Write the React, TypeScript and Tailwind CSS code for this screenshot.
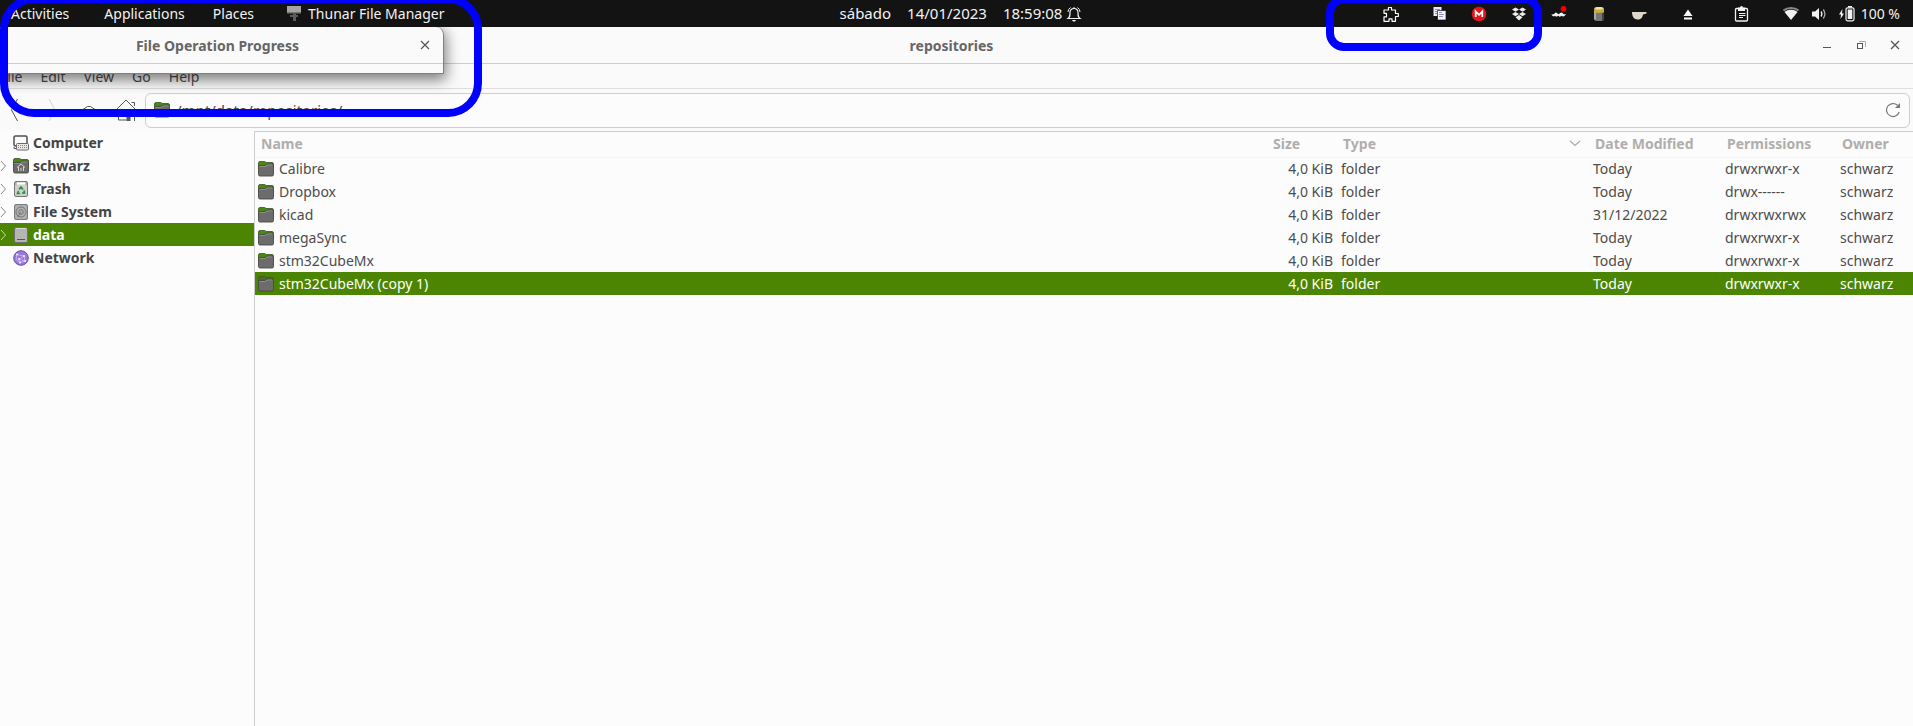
import type { ReactNode } from 'react'

type Row = { name: string; date: string; perms: string; selected?: boolean }

const rows: Row[] = [
  { name: 'Calibre', date: 'Today', perms: 'drwxrwxr-x' },
  { name: 'Dropbox', date: 'Today', perms: 'drwx------' },
  { name: 'kicad', date: '31/12/2022', perms: 'drwxrwxrwx' },
  { name: 'megaSync', date: 'Today', perms: 'drwxrwxr-x' },
  { name: 'stm32CubeMx', date: 'Today', perms: 'drwxrwxr-x' },
  { name: 'stm32CubeMx (copy 1)', date: 'Today', perms: 'drwxrwxr-x', selected: true },
]

function Icon({ children, className = '' }: { children: ReactNode; className?: string }) {
  return (
    <svg viewBox="0 0 16 16" className={`size-4 shrink-0 ${className}`} fill="none" aria-hidden="true">
      {children}
    </svg>
  )
}

function FolderIcon({ home, dim }: { home?: boolean; dim?: boolean }) {
  return (
    <Icon>
      <path d="M.5 8V2Q.5 .5 2 .5h4.500q1 0 1.500 1h6q1.500 0 1.500 1.500v5z" fill={dim ? '#4f6a2e' : '#468a12'} stroke={dim ? '#46552f' : '#39561d'} strokeWidth=".8" />
      <path d="M.5 5.500q0-1 1-1H7L8.500 3H14q1.500 0 1.500 1.500v9q0 1.500-1.500 1.500H2Q.5 15 .5 13.500z" fill="#6c6c6c" stroke="#4a4a42" strokeWidth=".9" />
      <path d="M1.500 5.500H7.500L9 4h5.500" stroke="#979797" strokeWidth=".8" />
      {home && <path d="M4 9.500 8 6l4 3.500M5.500 9v4M10.500 9v4M8 13v-3" stroke="#d8d8d8" />}
    </Icon>
  )
}

const places: { label: string; expander: boolean; selected?: boolean; icon: ReactNode }[] = [
  {
    label: 'Computer',
    expander: false,
    icon: (
      <Icon>
        <rect x="1" y="1" width="13" height="10" rx="1.500" fill="#fafafa" stroke="#505050" strokeWidth="1.500" />
        <path d="M1 12v1.500h3" stroke="#505050" />
        <rect x="3.500" y="8.500" width="12" height="6.500" rx="1" fill="#e8e8e8" stroke="#6b6b6b" />
        <path d="M5 10.500h9M5 12.500h9" stroke="#8a8a8a" strokeDasharray="1 1" />
      </Icon>
    ),
  },
  { label: 'schwarz', expander: true, icon: <FolderIcon home /> },
  {
    label: 'Trash',
    expander: true,
    icon: (
      <Icon>
        <rect x="1.500" y=".5" width="13" height="15" rx="1.500" fill="#cfcfcf" stroke="#777" />
        <path d="M3 2.500h10" stroke="#fff" strokeWidth="2" />
        <path d="M3 1v3M13 1v3" stroke="#888" />
        <path d="M6 8.500 8 6l2 2.500M11 9.500 11.500 12H9M7 12.500H4.500L5.500 10" stroke="#23913a" strokeWidth="1.600" />
      </Icon>
    ),
  },
  {
    label: 'File System',
    expander: true,
    icon: (
      <Icon>
        <rect x="1.500" y=".5" width="13" height="15" rx="1.500" fill="#b0b0b0" stroke="#7a7a7a" />
        <circle cx="8" cy="8" r="5" stroke="#777" />
        <circle cx="8" cy="8" r="2.300" stroke="#777" />
        <path d="m8 8-3.500 5" stroke="#777" />
      </Icon>
    ),
  },
  {
    label: 'data',
    expander: true,
    selected: true,
    icon: (
      <Icon>
        <rect x="1.500" y=".5" width="13" height="15" rx="1.500" fill="#b5b5b5" stroke="#6f6f6f" />
        <path d="M4 12.500h8" stroke="#555" />
        <path d="M3 1.500h10" stroke="#d8d8d8" />
      </Icon>
    ),
  },
  {
    label: 'Network',
    expander: false,
    icon: (
      <Icon>
        <circle cx="8" cy="8" r="7.300" fill="#9a78de" stroke="#6a53a0" />
        <path d="m4 4.500 7 1.500 1 5-5 1.500-4-3zM11 6 6 9l6 2M6 9l1 3.500" stroke="#cdbcf3" strokeWidth=".8" />
        <path d="M4 4.500h.1M11 6h.1M12 11h.1M6 9h.1M7 12.500h.1" stroke="#efe8ff" strokeWidth="2" strokeLinecap="round" />
      </Icon>
    ),
  },
]

function TopBar() {
  return (
    <header className="relative z-20 grid h-[27px] grid-cols-[1fr_auto_1fr] items-center bg-[#131313] pl-[11px] pr-0.5 text-[#f2f2f2]">
      <nav className="flex items-center">
        <button className="mr-[35px]">Activities</button>
        <button className="mr-7">Applications</button>
        <button className="mr-8">Places</button>
        <button className="flex items-center gap-1.5">
          <Icon>
            <path d="M1 0h14v6H1z" fill="#a5a5a5" />
            <path d="M1 6h14v1.500H1z" fill="#777" />
            <path d="M4 9h8v2H4zM7 7.500h3V15H7z" fill="#5c5c5c" />
          </Icon>
          Thunar File Manager
        </button>
      </nav>

      <button className="flex items-center text-[15px]">
        <span className="mr-4">sábado</span>
        <span className="mr-4">14/01/2023</span>
        <span className="mr-1">18:59:08</span>
        <Icon>
          <path d="M2 12.500h12c-2-1.500-2-2.500-2-6C12 4 10.500 2.500 8 2.500S4 4 4 6.500c0 3.500 0 4.500-2 6z" stroke="#f2f2f2" strokeWidth="1.200" />
          <path d="M6 14h4l-1 1.500H7zM7.500 1h1v1.500h-1z" fill="#f2f2f2" />
          <path d="M2 6Q2 3 4.500 1.500M14 6q0-3-2.500-4.500" stroke="#f2f2f2" />
        </Icon>
      </button>

      <div className="flex items-center justify-end pr-[11px]">
        <Icon className="mr-[33px]">
          <path d="M1 4h4.500V1.500h3V4h4v3.500h2.800v3h-2.800v4.800H9v-2.500H6v2.500H1v-4.500h2.500V7.300H1z" stroke="#fff" strokeWidth="1.200" strokeLinejoin="round" />
        </Icon>
        <Icon className="mr-[23px]">
          <path d="M1.500 1h8v9h-8z" fill="#e9e9f5" />
          <path d="M3 3.500h5M3 5.500h2M3 7.500h2" stroke="#8f8fd0" />
          <path d="M5.500 4.500H14V14H5.500z" fill="#f4f4ff" stroke="#131313" strokeWidth=".7" />
          <path d="M7 6.500h3M7 8.500h5M7 10.500h4" stroke="#8f8fd0" />
        </Icon>
        <div className="flex gap-6">
          <Icon>
            <circle cx="8" cy="8" r="7.300" fill="#e5131b" />
            <path d="M4.700 11V5.500L8 8.800l3.300-3.300V11" stroke="#fff" strokeWidth="1.800" />
          </Icon>
          <Icon>
            <path d="m4.500 1.500 3.500 2-3.500 2.200L1 3.500zM11.500 1.500l3.500 2-3.500 2.200L8 3.500zM4.500 5.900 8 8.100l-3.500 2.200L1 8.100zM11.500 5.900 15 8.100l-3.500 2.200L8 8.100zM4.500 11.200 8 9l3.500 2.200L8 14.500z" fill="#ececec" />
          </Icon>
          <Icon>
            <path d="M.5 8c1.500.8 2.500.5 4-1.500 1 0 2 1 3 1.800 1-.8 2-1.800 3.500-1.800 1.500 2 2.500 2 4 1.500-1 2.500-3 3-4.500 1.800-1.500 1.200-2.500 1-3.500 0-1 1-2 1.200-3 0C2.500 11 1 10 .5 8z" fill="#f2f2f2" />
            <circle cx="12.500" cy="2.800" r="2.900" fill="#f00000" />
          </Icon>
          <Icon>
            <path d="M3 3h10v10.500c0 2-10 2-10 0z" fill="#777" />
            <path d="M3 5h2v9l-2-1z" fill="#aaa" />
            <path d="M11 5h2v9l-2 .6z" fill="#444" />
            <path d="M3 2.500C3 .5 13 .5 13 2.500V6c0 1.200-10 1.200-10 0z" fill="#c6b03a" />
            <ellipse cx="8" cy="2.300" rx="4" ry="1.300" fill="#efe7a6" />
          </Icon>
          <Icon>
            <path d="M1 6h14.500v1.500L12 8.500c-.5 3-2 5-5.500 5S1 10.500 1 6z" fill="#ddd8c8" />
          </Icon>
        </div>
        <Icon className="mx-[33px]">
          <path d="M8 3.500 12.500 10h-9zM4 11.500h8v2H4z" fill="#fff" />
        </Icon>
        <Icon className="mr-[33px] ml-[5px]">
          <rect x="1.500" y="2.500" width="12" height="12.500" rx="1" stroke="#f2f2f2" strokeWidth="1.300" />
          <path d="M4 1.500h2q0-1.500 1.500-1.500T9 1.500h2V5H4z" fill="#f2f2f2" />
          <path d="M5 7.500h6.500M5 9.500h6.500M5 11.500h4" stroke="#f2f2f2" strokeWidth="1.200" />
        </Icon>
        <div className="mr-1.5 flex gap-3">
          <Icon>
            <path d="M.5 4.500C4.500 1 11.500 1 15.500 4.500" stroke="#888" strokeWidth="2" />
            <path d="M1.500 6C5 3 11 3 14.500 6L8 14z" fill="#f2f2f2" />
          </Icon>
          <Icon>
            <path d="M1 5.500h3L8 2v12l-4-3.500H1z" fill="#f2f2f2" />
            <path d="M10 5.500q1.800 2.500 0 5" stroke="#f2f2f2" strokeWidth="1.300" />
            <path d="M12.300 3.500q3.200 4.500 0 9" stroke="#aaa" strokeWidth="1.300" />
          </Icon>
          <Icon>
            <path d="M3.500 3 0 8.500h2L1.500 13 5 7.500H3z" fill="#f2f2f2" />
            <rect x="7" y="1.800" width="8" height="13" rx="1.500" stroke="#f2f2f2" strokeWidth="1.200" />
            <path d="M8.700 3.500h4.600v9.600H8.700zM9 0h4v1.500H9z" fill="#f2f2f2" />
          </Icon>
        </div>
        <span>100 %</span>
      </div>
    </header>
  )
}

function TitleBar() {
  return (
    <div className="grid h-[37px] grid-cols-[1fr_auto_1fr] items-center border-b border-[#cdcdcd] bg-[#fafafa] pr-[10px]">
      <span />
      <h1 className="font-bold text-[#666]">repositories</h1>
      <div className="flex justify-end gap-[18px] text-[#555]">
        <button aria-label="Minimize">
          <Icon><path d="M4 10.500h8" stroke="currentColor" /></Icon>
        </button>
        <button aria-label="Restore">
          <Icon>
            <path d="M6 4.500h6.500V10" stroke="#aaa" />
            <rect x="4.500" y="6.500" width="5" height="5" stroke="currentColor" />
          </Icon>
        </button>
        <button aria-label="Close">
          <Icon><path d="m4 4 8 8M12 4l-8 8" stroke="currentColor" strokeWidth="1.300" /></Icon>
        </button>
      </div>
    </div>
  )
}

function Toolbar() {
  return (
    <div className="flex h-[42px] items-center pr-[3px]">
      <div className="flex w-[145px] shrink-0 items-center text-[#555]">
        <button aria-label="Back" className="ml-[9px]">
          <svg viewBox="0 0 10 24" className="h-6 w-2.5" fill="none"><path d="m8.500 1-6 11 6 11" stroke="currentColor" /></svg>
        </button>
        <button aria-label="Forward" className="ml-7">
          <svg viewBox="0 0 10 24" className="h-6 w-2.5" fill="none"><path d="m2 1 6 11-6 11" stroke="#d3d3d3" /></svg>
        </button>
        <button aria-label="Up" className="ml-5">
          <svg viewBox="0 0 24 24" className="size-6" fill="none"><path d="m6 11.500 4.500-3h3l4.500 3" stroke="currentColor" /></svg>
        </button>
        <button aria-label="Home" className="ml-3.5">
          <svg viewBox="0 0 24 24" className="size-6" fill="none">
            <path d="m1.500 11.500 9.500-9.500 9.500 9.500M3.500 11v11h8M16.500 4.500h3V8M19.500 12v11" stroke="currentColor" />
            <path d="M11.500 18.500h4V23h-4z" fill="currentColor" />
          </svg>
        </button>
      </div>
      <div className="flex h-[35px] grow items-center gap-1.5 rounded-md border border-[#cdcdcd] bg-[#fcfcfc] px-2">
        <FolderIcon />
        <input aria-label="Location" defaultValue="/mnt/data/repositories/" className="min-w-0 grow bg-transparent text-[15px] outline-none" />
        <button aria-label="Reload" className="text-[#777]">
          <Icon>
            <path d="M14.200 10A6.500 6.500 0 1 1 12.500 3.300" stroke="currentColor" strokeWidth="1.200" />
            <path d="M15 1v5h-5z" fill="currentColor" />
          </Icon>
        </button>
      </div>
    </div>
  )
}

function Sidebar() {
  return (
    <aside className="w-[254px] shrink-0">
      <ul>
        {places.map(p => (
          <li key={p.label} className={p.selected ? 'bg-[#4b8501] text-white' : 'text-[#444]'}>
            <a href="#" className="flex h-[23px] items-center font-bold">
              <svg viewBox="0 0 8 12" className="mr-[5px] h-3 w-2" fill="none" aria-hidden="true">
                {p.expander && <path d="m1 1 4.500 5L1 11" stroke={p.selected ? '#c4d8ac' : '#888'} />}
              </svg>
              {p.icon}
              <span className="ml-1">{p.label}</span>
            </a>
          </li>
        ))}
      </ul>
    </aside>
  )
}

function FileTable() {
  return (
    <main className="grow border-t border-l border-[#cdcdcd] bg-[#fcfcfc]">
      <table className="w-full table-fixed border-collapse">
        <colgroup>
          <col />
          <col className="w-[70px]" />
          <col className="w-[252px]" />
          <col className="w-[132px]" />
          <col className="w-[115px]" />
          <col className="w-[77px]" />
        </colgroup>
        <thead>
          <tr className="h-[25px] text-left text-[#b0aeac] *:border-b *:border-[#f5f5f5] *:p-0 *:pb-0.5 *:pl-1.5 *:font-bold">
            <th>Name</th>
            <th>Size</th>
            <th>
              <div className="flex items-center justify-between pr-1.5">
                Type
                <Icon><path d="m3 6 5 4.500L13 6" stroke="#aaa" strokeWidth="1.200" /></Icon>
              </div>
            </th>
            <th>Date Modified</th>
            <th>Permissions</th>
            <th>Owner</th>
          </tr>
        </thead>
        <tbody>
          {rows.map(r => (
            <tr key={r.name} className={`h-[23px] whitespace-nowrap *:p-0 ${r.selected ? 'bg-[#4b8501] text-white' : ''}`}>
              <td>
                <div className="flex items-center gap-[5px] pl-[3px]">
                  <FolderIcon dim={r.selected} />
                  {r.name}
                </div>
              </td>
              <td><div className="pr-1 text-right">4,0 KiB</div></td>
              <td><div className="pl-1">folder</div></td>
              <td><div className="pl-1">{r.date}</div></td>
              <td><div className="pl-1">{r.perms}</div></td>
              <td><div className="pl-1">schwarz</div></td>
            </tr>
          ))}
        </tbody>
      </table>
    </main>
  )
}

function ProgressDialog() {
  return (
    <section
      aria-label="File Operation Progress"
      className="absolute top-[27px] left-0 z-10 w-[444px] rounded-tr-lg border-r border-b border-[#808080] bg-[#fafafa] shadow-[0_4px_14px_2px_rgba(0,0,0,0.5)]"
    >
      <div className="flex h-[37px] items-center border-b border-[#cdcdcd] pr-2.5 pl-[18px]">
        <h2 className="grow text-center font-bold text-[#666]">File Operation Progress</h2>
        <button aria-label="Close dialog" className="text-[#555]">
          <Icon><path d="m4 4 8 8M12 4l-8 8" stroke="currentColor" strokeWidth="1.200" /></Icon>
        </button>
      </div>
      <div className="h-[9px]" />
    </section>
  )
}

export default function App() {
  return (
    <div className="relative flex min-h-screen flex-col overflow-hidden bg-[#fafafa] font-['Noto_Sans',sans-serif] text-[14px] leading-[19px] text-[#4c4c4c]">
      <TopBar />
      <TitleBar />
      <nav className="flex h-[25px] items-center gap-[18px] border-b border-[#dedede] bg-[#fafafa]">
        <button>File</button>
        <button>Edit</button>
        <button>View</button>
        <button>Go</button>
        <button>Help</button>
      </nav>
      <Toolbar />
      <div className="flex grow bg-[#fcfcfc]">
        <Sidebar />
        <FileTable />
      </div>

      <ProgressDialog />

      {/* highlight frames */}
      <div className="pointer-events-none absolute -top-[5px] left-0 z-30 h-[122px] w-[482px] rounded-[34px] border-8 border-[#0000ff]" />
      <div className="pointer-events-none absolute -top-[5px] right-[371px] z-30 h-14 w-[216px] rounded-[18px] border-8 border-[#0000ff]" />
    </div>
  )
}
